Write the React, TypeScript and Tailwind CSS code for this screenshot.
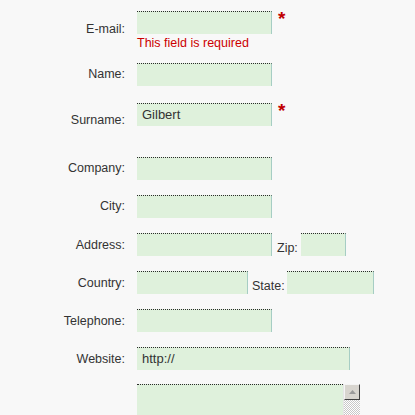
import React from 'react';

const inputCls =
    'h-[23px] bg-[#dff1dc] border-t border-r border-solid [border-top-style:dotted] border-t-[#2b2b2b] border-r-[#a6cdc4] text-[13px] text-[#333] pl-[5px] leading-[22px]';

const Label: React.FC<{ text: string; mt: string }> = ({ text, mt }) => (
    <div className={`w-[137px] shrink-0 pr-[12px] text-right leading-[15px] ${mt}`}>{text}</div>
);

const Star: React.FC = () => (
    <span className="ml-[6px] -mt-[2px] text-[19px] font-bold leading-[20px] text-[#c00000]">*</span>
);

export default function App() {
    return (
        <div className="h-[415px] w-[415px] overflow-hidden bg-[#f8f8f8] pt-[11px] font-['Liberation_Sans',Arial,sans-serif] text-[12.5px] text-[#333]">
            {/* E-mail */}
            <div className="flex h-[52px] items-start">
                <Label text="E-mail:" mt="mt-[11px]" />
                <div className="flex flex-col">
                    <div className="flex items-start">
                        <div className={`${inputCls} w-[135px]`}></div>
                        <Star />
                    </div>
                    <div className="mt-[2px] leading-[15px] text-[#cc0000]">This field is required</div>
                </div>
            </div>

            {/* Name */}
            <div className="flex h-[40px] items-start">
                <Label text="Name:" mt="mt-[4px]" />
                <div className={`${inputCls} w-[135px]`}></div>
            </div>

            {/* Surname */}
            <div className="flex h-[54px] items-start">
                <Label text="Surname:" mt="mt-[10px]" />
                <div className={`${inputCls} w-[135px]`}>Gilbert</div>
                <Star />
            </div>

            <div className="flex h-[38px] items-start">
                <Label text="Company:" mt="mt-[4px]" />
                <div className={`${inputCls} w-[135px]`}></div>
            </div>

            <div className="flex h-[38px] items-start">
                <Label text="City:" mt="mt-[4px]" />
                <div className={`${inputCls} w-[135px]`}></div>
            </div>

            <div className="flex h-[38px] items-start">
                <Label text="Address:" mt="mt-[5px]" />
                <div className={`${inputCls} w-[135px]`}></div>
                <span className="mt-[8px] ml-[5px] mr-[3px] leading-[15px]">Zip:</span>
                <div className={`${inputCls} w-[45px]`}></div>
            </div>

            <div className="flex h-[38px] items-start">
                <Label text="Country:" mt="mt-[5px]" />
                <div className={`${inputCls} w-[111px]`}></div>
                <span className="mt-[8px] ml-[4px] mr-[2px] leading-[15px]">State:</span>
                <div className={`${inputCls} w-[87px]`}></div>
            </div>

            <div className="flex h-[38px] items-start">
                <Label text="Telephone:" mt="mt-[5px]" />
                <div className={`${inputCls} w-[135px]`}></div>
            </div>

            <div className="flex h-[37px] items-start">
                <Label text="Website:" mt="mt-[5px]" />
                <div className={`${inputCls} w-[213px]`}>http://</div>
            </div>

            {/* Comments textarea */}
            <div className="flex items-start">
                <div className="w-[137px] shrink-0"></div>
                <div className="flex h-[40px] w-[223px]">
                    <div className="flex-1 bg-[#dff1dc] border-t border-dotted border-[#2b2b2b]"></div>
                    <div className="flex w-[17px] flex-col border-l border-[#e6e6e6]">
                        <div className="flex h-[16px] items-center justify-center bg-[#d8d5cf] border border-t-[#f4f4f4] border-l-[#f4f4f4] border-r-[#404040] border-b-[#404040]">
                            <svg width="7" height="4" viewBox="0 0 7 4">
                                <path d="M3.5 0 L7 4 L0 4 Z" fill="#9a9a9a" />
                            </svg>
                        </div>
                        <div className="flex-1 bg-[conic-gradient(#ffffff_25%,#c8c8c8_0_50%,#ffffff_0_75%,#c8c8c8_0)] bg-[length:2px_2px]"></div>
                    </div>
                </div>
            </div>
        </div>
    );
}
